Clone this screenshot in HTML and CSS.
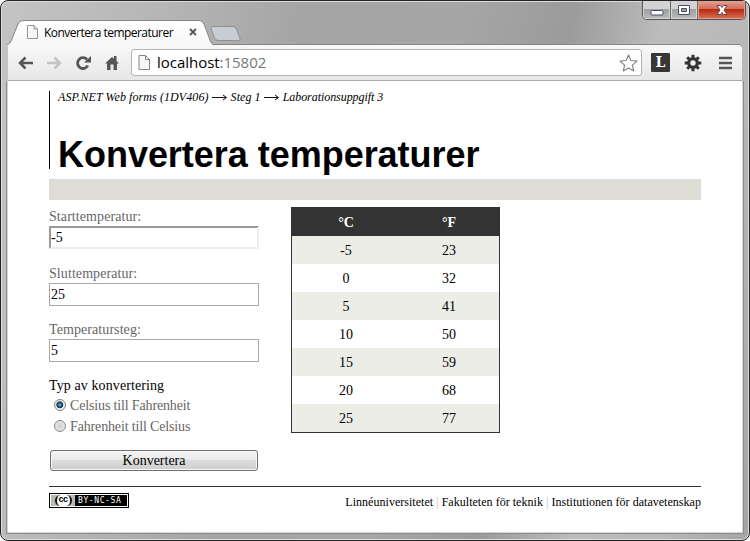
FILE: index.html
```html
<!DOCTYPE html>
<html lang="sv">
<head>
<meta charset="utf-8">
<title>Konvertera temperaturer</title>
<link rel="stylesheet" href="styles.css">
</head>
<body>
<div class="window">
  <div class="titlebar">
    <div class="tab">
      <svg class="tab-shape" width="207" height="26" viewBox="0 0 207 26">
        <defs><linearGradient id="tabfill" x1="0" y1="0" x2="0" y2="1"><stop offset="0" stop-color="#fff"/><stop offset="1" stop-color="#f7f7f7"/></linearGradient></defs>
        <path d="M0 25Q3 24 4.500 20L11 4Q12.500 .5 16 .5H192Q195.500 .5 197 4L203 20Q204.500 24.500 207 25V26H0Z" fill="url(#tabfill)"/>
        <path d="M0 25Q3 24 4.500 20L11 4Q12.500 .5 16 .5H192Q195.500 .5 197 4L203 20Q204.500 24.500 207 25" fill="none" stroke="#858585"/>
      </svg>
      <svg class="page-icon" width="11" height="14" viewBox="0 0 11 14"><path d="M.5.500H7L10.500 4V13.500H.5ZM7 .5V4H10.500" fill="#f7f7f7" stroke="#959595"/></svg>
      <span class="tab-title">Konvertera temperaturer</span>
      <svg class="tab-close" width="8" height="8" viewBox="0 0 8 8"><path d="M1 1L7 7M7 1L1 7" stroke="#555" stroke-width="1.800"/></svg>
    </div>
    <svg class="new-tab" width="32" height="16" viewBox="0 0 32 16"><path d="M3 .5H23Q25.500 .5 26.500 3L30 12Q31 14.500 28.500 14.500H8Q5.500 14.500 4.500 12L1 3Q.5.500 3 .5Z" fill="#c8ccd3" stroke="#8e9094"/></svg>
    <div class="controls">
      <span class="control min"><svg width="14" height="6" viewBox="0 0 14 6"><rect x="1" y=".5" width="12" height="4.500" rx="1" fill="#fff" stroke="#4b4e60"/></svg></span>
      <span class="control max"><svg width="12" height="10" viewBox="0 0 12 10"><path fill-rule="evenodd" d="M.500.500H11.500V9.500H.500ZM3.500 3.500H8.500V6.500H3.500Z" fill="#fff" stroke="#4b4e60"/></svg></span>
      <span class="control close"><svg width="12" height="10" viewBox="0 0 12 10"><path d="M1 .5H4.500L6 2.500 7.500.500H11L8 5 11 9.500H7.500L6 7.500 4.500 9.500H1L4 5Z" fill="#fff" stroke="#5c4550"/></svg></span>
    </div>
  </div>
  <div class="toolbar">
    <svg class="nav-icons" width="112" height="20" viewBox="0 0 112 20">
      <g fill="none" stroke="#555" stroke-width="2.500"><path d="M17 10H4M9.500 4.500L4 10 9.500 15.500"/><path stroke="#c4c4c4" d="M31 10H44M38.500 4.500L44 10 38.500 15.500"/><path stroke-width="2.800" d="M71 6.500A5.400 5.400 0 1 0 71.800 12.500"/></g>
      <path d="M75 3V9.500H68Z" fill="#555"/>
      <path d="M89 10.500L96 4 98 5.800V3H100.500V8L103 10.500H101V17H97.500V11.500H94.500V17H91V10.500Z" fill="#555"/>
    </svg>
    <div class="address">
      <svg class="page-icon" width="12" height="15" viewBox="0 0 12 15"><path d="M1 .5H7.500L11.500 4.500V14.500H1ZM7.500.500V4.500H11.500" fill="#f7f7f7" stroke="#858585"/></svg>
      <span class="url">localhost<span class="port">:15802</span></span>
      <svg class="star" width="19" height="18" viewBox="0 0 19 18"><path d="M9.500 1L11.900 6.500 18 7.100 13.400 11.100 14.700 17 9.500 13.900 4.300 17 5.600 11.100 1 7.100 7.100 6.500Z" fill="#fff" stroke="#858585" stroke-width="1.200" stroke-linejoin="round"/></svg>
    </div>
    <span class="extension">L</span>
    <svg class="gear" width="18" height="18" viewBox="0 0 18 18"><g fill="none" stroke="#333"><circle cx="9" cy="9" r="4.300" stroke-width="3.200"/><path stroke-width="3" d="M9 .7V4M9 14V17.300M.7 9H4M14 9H17.300M3.200 3.200L5.500 5.500M12.500 12.500L14.800 14.800M3.200 14.800L5.500 12.500M12.500 5.500L14.800 3.200"/></g></svg>
    <svg class="menu" width="13" height="14" viewBox="0 0 13 14"><path d="M0 2H13M0 7H13M0 12H13" stroke="#555" stroke-width="2.600"/></svg>
  </div>
  <main class="page">
    <header class="page-header">
      <p class="breadcrumb"><span>ASP.NET Web forms (1DV406)</span><svg width="16" height="7" viewBox="0 0 16 7"><path d="M0 3.500H14M11 1L14.500 3.500 11 6" fill="none" stroke="#111"/></svg><span>Steg 1</span><svg width="16" height="7" viewBox="0 0 16 7"><path d="M0 3.500H14M11 1L14.500 3.500 11 6" fill="none" stroke="#111"/></svg><span class="current">Laborationsuppgift 3</span></p>
      <h1>Konvertera temperaturer</h1>
    </header>
    <div class="band"></div>
    <div class="content">
      <form class="form">
        <label class="field"><span>Starttemperatur:</span><input class="focused" type="text" value="-5"></label>
        <label class="field"><span>Sluttemperatur:</span><input type="text" value="25"></label>
        <label class="field"><span>Temperatursteg:</span><input type="text" value="5"></label>
        <p class="group-title">Typ av konvertering</p>
        <label class="choice"><input type="radio" name="type" checked><span>Celsius till Fahrenheit</span></label>
        <label class="choice"><input type="radio" name="type"><span>Fahrenheit till Celsius</span></label>
        <button class="submit" type="button">Konvertera</button>
      </form>
      <table class="results">
        <thead><tr><th>°C</th><th>°F</th></tr></thead>
        <tbody>
          <tr><td>-5</td><td>23</td></tr>
          <tr><td>0</td><td>32</td></tr>
          <tr><td>5</td><td>41</td></tr>
          <tr><td>10</td><td>50</td></tr>
          <tr><td>15</td><td>59</td></tr>
          <tr><td>20</td><td>68</td></tr>
          <tr><td>25</td><td>77</td></tr>
        </tbody>
      </table>
    </div>
    <footer class="footer">
      <div class="license"><span class="cc"><span>cc</span></span><span class="terms">BY-NC-SA</span></div>
      <p class="credits">Linnéuniversitetet <i class="warm">|</i> Fakulteten för teknik <i>|</i> Institutionen för datavetenskap</p>
    </footer>
  </main>
</div>
</body>
</html>
```
FILE: styles.css
```css
* { box-sizing: border-box; }
body { margin: 0; background: #fff; font-family: "Liberation Serif", serif; font-size: 14px; color: #000; overflow: hidden; }
p, h1 { margin: 0; }
svg { display: block; flex: none; }

.window {
  width: 750px; height: 541px; padding: 0 7px 8px 7px;
  border: 1px solid #242424; border-radius: 8px;
  background: linear-gradient(100deg, #c4c4c4 0, #b5b5b5 20%, #a5a5a5 36%, #a6a6a6 55%, #9b9b9b 68%, #bcbcbc 79%, #b8b8b8 90%, #a4a4a4 100%);
  box-shadow: inset 0 0 0 1px #ddd;
}
.titlebar { position: relative; z-index: 1; display: flex; height: 44px; align-items: flex-end; }
.tab { position: relative; display: flex; align-items: center; width: 207px; height: 26px; margin-left: -1px; padding: 0 14px 0 20px; }
.tab-shape { position: absolute; left: 0; top: 1px; }
.tab .page-icon, .tab-title, .tab-close { position: relative; }
.tab-title { flex: 1; margin-left: 6px; padding-top: 2px; font: 12px/16px "Open Sans", sans-serif; letter-spacing: -.53px; white-space: nowrap; }
.tab-close { margin-right: 3px; }
.new-tab { margin: 0 0 3px -4px; }
.controls { display: flex; align-self: flex-start; margin-left: auto; margin-right: -4px; height: 19px; border: 1px solid #555; border-top: 0; border-radius: 0 0 5px 5px; overflow: hidden; }
.control { display: grid; place-items: center; width: 27px; background: linear-gradient(#d2d2d3 45%, #9fa0a3 46%, #b9babd); box-shadow: inset 0 0 0 1px #d7d7d7; border-right: 1px solid #666; }
.control.min { width: 28px; }
.control.min svg { margin-top: 5px; }
.control.close { width: 47px; border: 0; background: linear-gradient(#e4a092, #d36b53 46%, #b72b13 47%, #db7351); box-shadow: inset 0 0 0 1px #dda092; }

.toolbar { display: flex; align-items: center; height: 36px; padding: 0 10px 0 8px; border-bottom: 1px solid #aaa; border-radius: 2px 4px 0 0; background: linear-gradient(#f8f8f8, #e7e7e7); box-shadow: 0 -1px #858585; }
.address { display: flex; align-items: center; width: 512px; height: 27px; margin-left: 3px; padding: 0 3px 0 6px; background: #fff; border: 1px solid #b5b5b5; border-radius: 3px; }
.url { flex: 1; margin-left: 7px; padding-bottom: 1px; font: 15px/22px "Open Sans", sans-serif; letter-spacing: -.03px; }
.port { color: #777; }
.extension { display: grid; place-items: center; width: 19px; height: 19px; margin-left: 9px; border-radius: 1px; background: #373737; color: #fff; font: bold 14px/19px "DejaVu Serif", serif; }
.gear { margin-left: 14px; }
.menu { margin-left: 17px; }

.page { height: 451px; padding: 10px 41px 0; background: #fff; box-shadow: 0 0 0 1px #d5d5d5, 0 0 0 2px #8d8d8d; clip-path: inset(0 -2px -2px); }
.page-header { height: 78px; padding-left: 8px; border-left: 1px solid #000; }
.breadcrumb { display: flex; gap: 3px; align-items: center; height: 12px; font-size: 12px; font-style: italic; line-height: 12px; letter-spacing: .08px; white-space: nowrap; }
.breadcrumb .current { letter-spacing: -.06px; }
.page-header h1 { margin-top: 32px; font: bold 36px/40px "Liberation Sans", sans-serif; letter-spacing: -.03px; white-space: nowrap; }
.band { height: 21px; margin-top: 10px; background: #ddddd5; }
.content { display: flex; gap: 32px; align-items: flex-start; height: 286px; padding-top: 7px; }
.form { width: 210px; padding-top: 1px; }
.field { display: block; height: 56.5px; color: #666; }
.field span { display: block; height: 18px; line-height: 17px; letter-spacing: .08px; }
.field input { display: block; width: 210px; height: 23px; padding: 1px 1px 0; border: 1px solid #a9a9ad; background: #fff; font: 14px "Liberation Serif", serif; color: #000; }
.field input.focused { border: 2px solid; border-color: #999 #ededed #ededed #999; padding: 0; }
.group-title { height: 17px; line-height: 16px; letter-spacing: .1px; }
.choice { display: flex; align-items: center; gap: 4px; height: 21px; padding: 1px 0 0 5px; color: #666; letter-spacing: -.15px; white-space: nowrap; }
.choice input { appearance: none; width: 12px; height: 12px; margin: -2px 0 0; border: 1px solid #858585; border-radius: 50%; background: radial-gradient(#ccc, #f4f4f4); }
.choice input:checked { background: radial-gradient(circle at 48% 48%, #6cc8ea 0, #1d6996 24%, #12334d 42%, #eee 52%); }
.submit { display: block; width: 208px; height: 21px; margin: 13px 0 0 1px; padding: 1px 0 0; border: 1px solid #707070; border-radius: 3px; background: linear-gradient(#f3f3f3, #e9e9e9 49%, #dcdcdc 50%, #cdcdcd); box-shadow: inset 0 0 0 1px #f8f8f8; font: 14px/18px "Liberation Serif", serif; color: #000; }
.results { width: 209px; border: 1px solid #333; border-spacing: 0; table-layout: fixed; text-align: center; }
.results th, .results td { height: 28px; padding: 2px 0 0; }
.results th:first-child { width: 108px; }
.results th { background: #333; color: #fff; font-weight: bold; }
.results td:last-child, .results th:last-child { padding-right: 1px; }
.results tbody tr:nth-child(odd) { background: #ecede6; }

.footer { display: flex; justify-content: space-between; align-items: flex-start; padding-top: 6px; border-top: 1px solid #333; }
.license { display: flex; width: 80px; height: 15px; border: 1px solid #000; padding: 1px; background: #fff; }
.cc { display: grid; place-items: center; width: 24px; background: #b3bbb0; }
.cc span { width: 17px; height: 11px; border: solid #111; border-width: 0 2px; border-radius: 8px; background: #fff; font: bold 9px/9px "Liberation Sans", sans-serif; text-align: center; letter-spacing: -.5px; }
.terms { flex: 1; padding-left: 3px; background: #000; color: #fff; font: 8px/11px "DejaVu Sans Mono", monospace; letter-spacing: .6px; white-space: nowrap; }
.credits { padding-top: 1px; font-size: 12px; line-height: 16px; letter-spacing: .03px; white-space: nowrap; }
.credits i { font-style: normal; color: #8fd3e4; }
.credits .warm { color: #e8b49c; }
```
